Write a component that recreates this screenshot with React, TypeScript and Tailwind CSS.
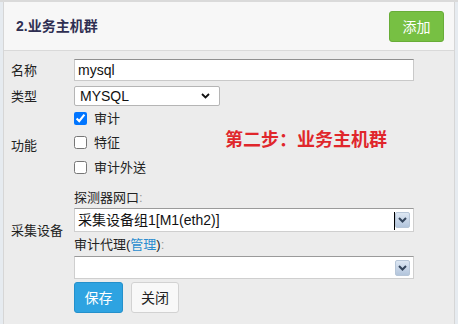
import React from "react";

const Arrow = () => (
  <div className="absolute right-[3px] top-1/2 -translate-y-1/2 w-[15px] h-[16px] rounded-[2px] border border-[#b7c6d8] bg-gradient-to-b from-[#dde7f3] to-[#b3c5dc] flex items-center justify-center">
    <svg width="9" height="6" viewBox="0 0 9 6">
      <path d="M1 1 L4.5 4.5 L8 1" stroke="#34455c" strokeWidth="2" fill="none" />
    </svg>
  </div>
);

export default function App() {
  const cjk = { fontFamily: '"Liberation Sans", "Noto Sans CJK SC", sans-serif' };
  return (
    <div className="w-[458px] h-[324px] bg-[#e6ebf0] border-t-2 border-[#dadada] overflow-hidden" style={cjk}>
      <div className="ml-[3px] w-[452px] h-full border-l border-r border-[#d6d6d6] flex flex-col">
        <div className="h-[49px] bg-[#f7f7f7] border-b border-[#d9d9d9] flex items-center justify-between pl-[12px] pr-[10px]">
          <div className="text-[14px] font-bold text-[#2f2f52] leading-none">2.业务主机群</div>
          <button className="w-[55px] h-[31px] bg-[#77c043] border border-[#68ad38] rounded-[3px] text-white text-[14px] leading-none mt-[1px]">
            添加
          </button>
        </div>
        <div className="relative flex-1 bg-[#ececec] pl-[7px] pt-[8px] text-[13px] text-[#222]">
          <div className="flex items-center h-[22px]">
            <div className="w-[63px] leading-none">名称</div>
            <div className="w-[340px] h-[22px] bg-white border border-[#c9c9c9] border-t-[#8f8f8f] flex items-center pl-[3px] text-[14px] text-[#111]">
              mysql
            </div>
          </div>
          <div className="flex items-center h-[20px] mt-[5px]">
            <div className="w-[63px] leading-none">类型</div>
            <div className="relative w-[146px] h-[20px] bg-white border border-[#b5b5b5] rounded-[2px] flex items-center pl-[5px] text-[14px] text-[#111]">
              MYSQL
              <svg className="absolute right-[9px] top-[6px]" width="9" height="6" viewBox="0 0 9 6">
                <path d="M1 1 L4.5 4.5 L8 1" stroke="#111" strokeWidth="1.8" fill="none" />
              </svg>
            </div>
          </div>
          <div className="flex items-center">
            <div className="w-[63px] leading-none pt-[6px]">功能</div>
            <div className="flex flex-col">
              <label className="flex items-center h-[24px] gap-[7px]">
                <input type="checkbox" defaultChecked className="w-[13px] h-[13px] m-0 accent-[#0075ff]" />
                <span className="leading-none">审计</span>
              </label>
              <label className="flex items-center h-[25px] gap-[7px]">
                <input type="checkbox" className="w-[13px] h-[13px] m-0" />
                <span className="leading-none">特征</span>
              </label>
              <label className="flex items-center h-[24px] gap-[7px]">
                <input type="checkbox" className="w-[13px] h-[13px] m-0" />
                <span className="leading-none">审计外送</span>
              </label>
            </div>
          </div>
          <div className="flex items-center">
            <div className="w-[63px] leading-none pt-[3px]">采集设备</div>
            <div className="flex flex-col">
              <div className="h-[29px] pt-[7px] flex items-center leading-none">
                探测器网口<span className="text-[#9a9a9a]">:</span>
              </div>
              <div className="relative w-[340px] h-[24px] bg-white border border-[#cfcfcf] border-t-[#9a9a9a] flex items-center pl-[3px] text-[14px] text-[#111]">
                采集设备组1[M1(eth2)]
                <div className="absolute right-[18px] top-[3px] w-px h-[18px] bg-black" />
                <Arrow />
              </div>
              <div className="h-[24px] flex items-center leading-none">
                审计代理(<span className="text-[#2a8ccf]">管理</span>)<span className="text-[#9a9a9a]">:</span>
              </div>
              <div className="relative w-[340px] h-[23px] bg-white border border-[#cfcfcf] border-t-[#9a9a9a]">
                <Arrow />
              </div>
            </div>
          </div>
          <div className="flex gap-[8px] mt-[3px] ml-[63px]">
            <button className="w-[49px] h-[31px] bg-[#2ea3e1] border border-[#2490cb] rounded-[3px] text-white text-[14px] leading-none">
              保存
            </button>
            <button className="w-[48px] h-[31px] bg-[#f8f8f8] border border-[#d2d2d2] rounded-[3px] text-[#222] text-[14px] leading-none">
              关闭
            </button>
          </div>
          <div className="absolute left-[221px] top-[80px] text-[18px] font-bold text-[#e0262b] leading-none whitespace-nowrap">
            第二步：业务主机群
          </div>
        </div>
      </div>
    </div>
  );
}
